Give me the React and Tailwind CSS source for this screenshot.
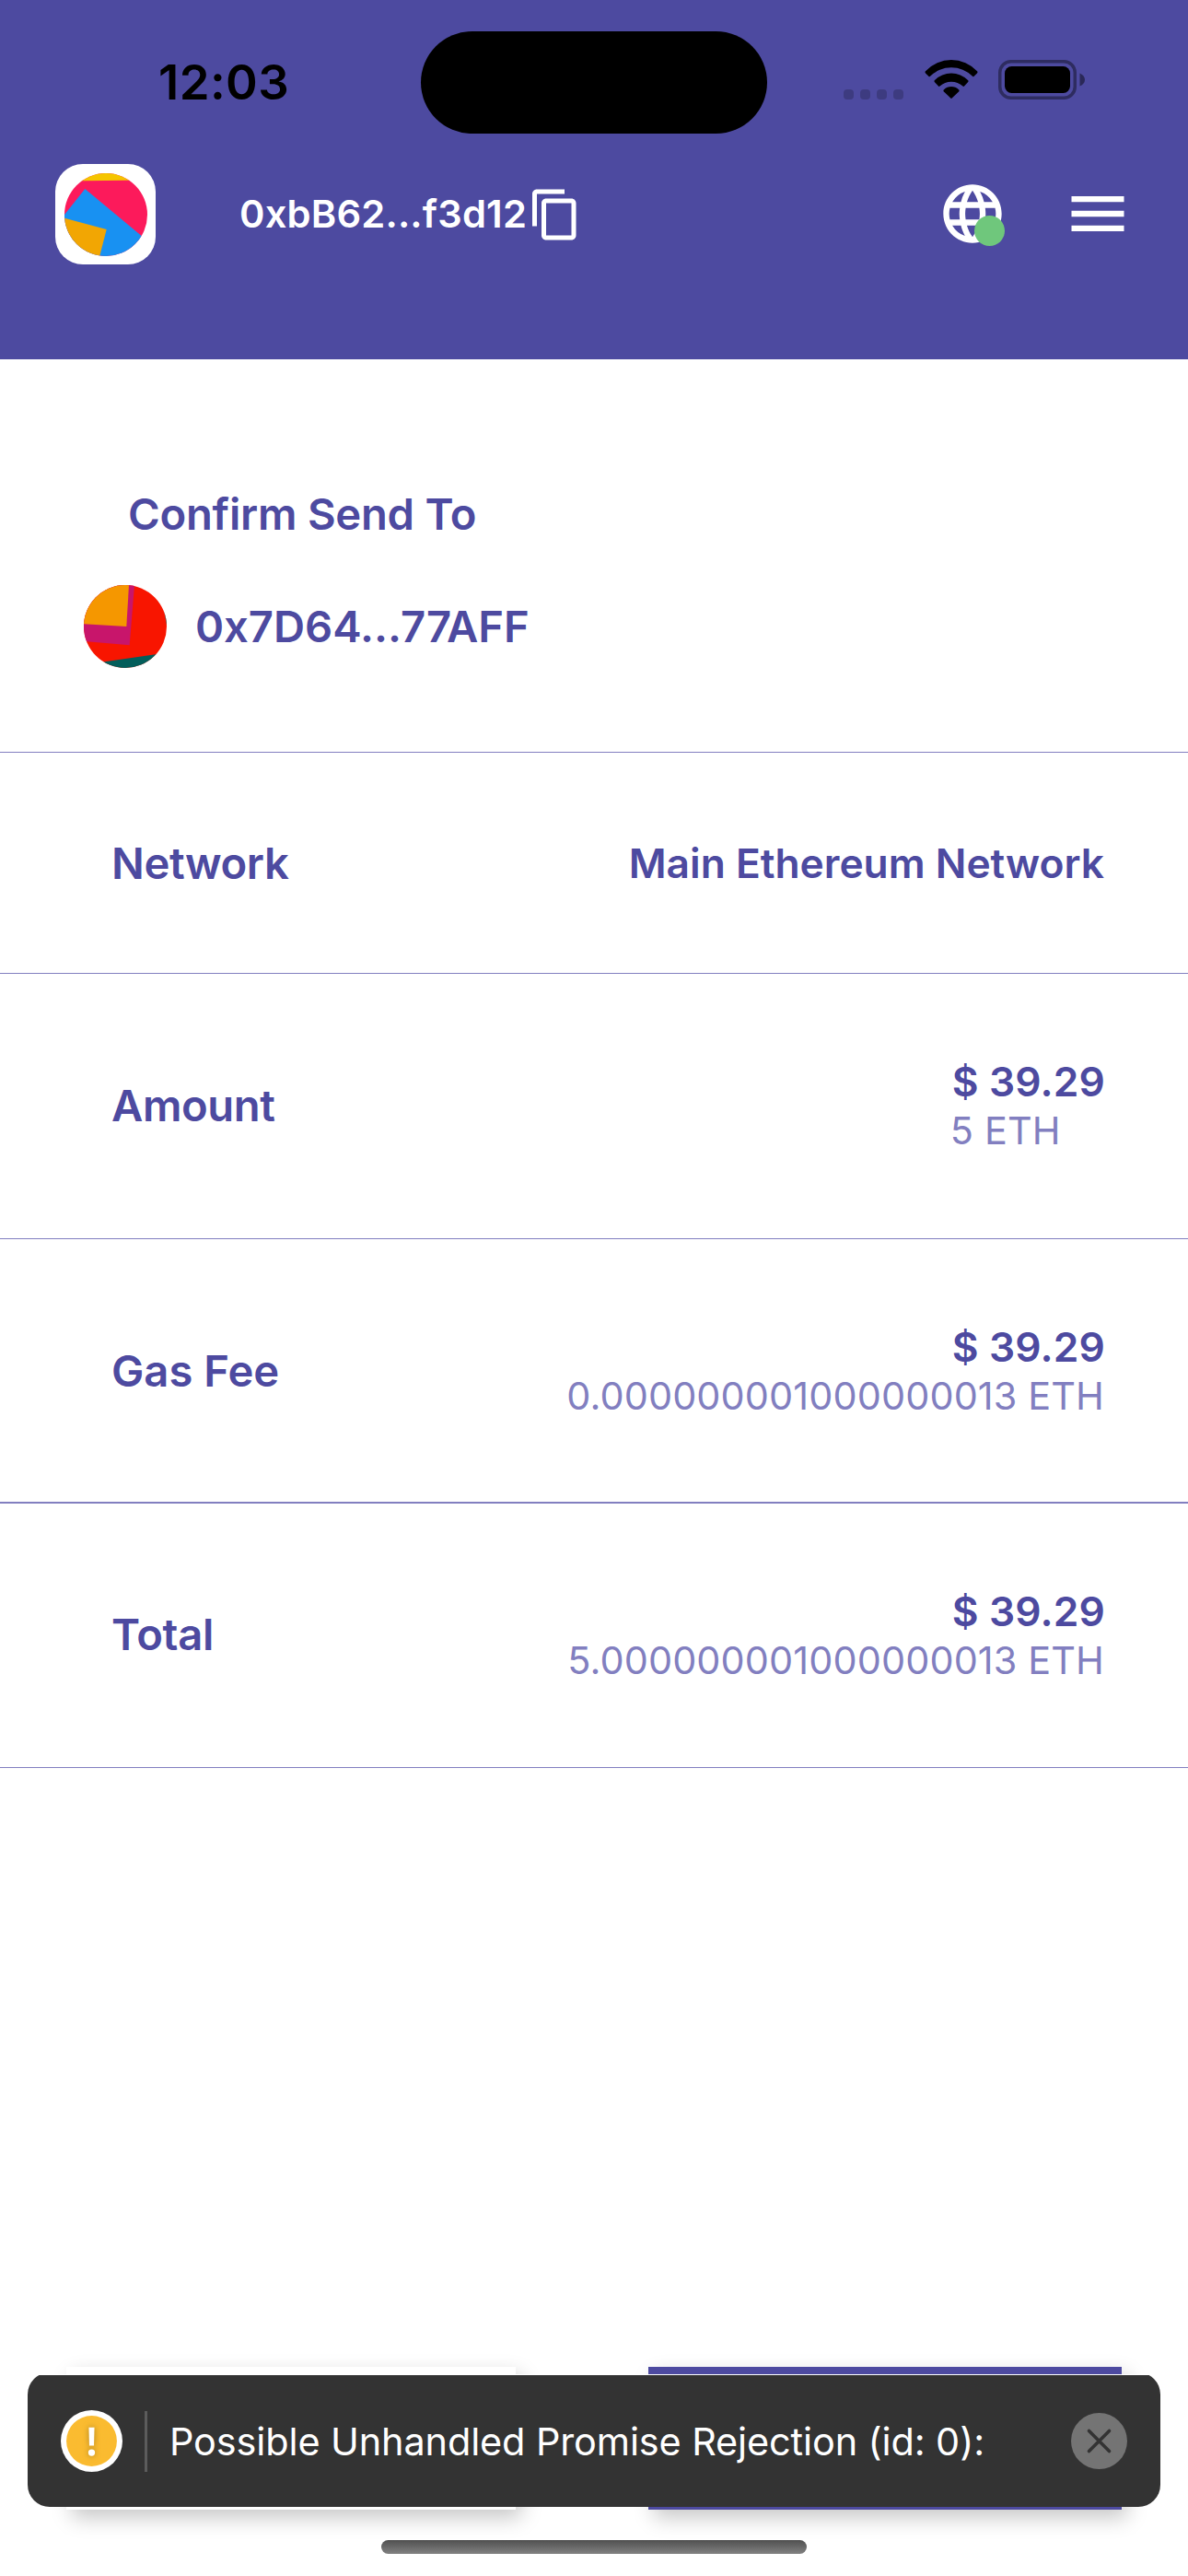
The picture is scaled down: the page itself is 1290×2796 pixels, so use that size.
import { MdContentCopy, MdLanguage, MdMenu } from "react-icons/md";

function WalletAvatar() {
  return (
    <svg className="size-[90px] rounded-full" viewBox="0 0 90 90">
      <rect width="90" height="90" fill="#fc1a5b" />
      <polygon points="0,0 90,0 90,7.6 0,8.4" fill="#f5c500" />
      <polygon points="22.3,17 100,81.6 100,110 -20,110 -20,70" fill="#1891f2" />
      <polygon points="45.7,61 -10,46 -10,110 33,110" fill="#f2a603" />
    </svg>
  );
}

function RecipientAvatar() {
  return (
    <svg className="size-[90px] rounded-full" viewBox="0 0 90 90">
      <rect width="90" height="90" fill="#f81500" />
      <polygon points="49.7,65.3 55,0 0,0 0,61" fill="#c8156b" />
      <polygon points="46.3,45 49,0 0,0 0,42.3" fill="#f59700" />
      <polygon points="0,86.4 90,73.5 90,90 0,90" fill="#035e5b" />
      <polygon points="87.2,28 90.8,48 92,28" fill="#035e5b" />
    </svg>
  );
}

function StatusBar() {
  return (
    <div className="flex h-[111px] items-center pl-[172px]">
      <span className="mt-[-1px] w-[285px] text-[52.7px] leading-none font-semibold tracking-[0.4px] text-black">12:03</span>
      <div className="h-[111px] w-[376px] rounded-full bg-black" />
      <div className="mt-[25px] ml-[83px] flex gap-[7px]">
        {[0, 1, 2, 3].map((i) => (
          <span key={i} className="size-[11px] rounded-[4px] bg-black/20" />
        ))}
      </div>
      <svg className="-mt-[7px] ml-[23px] h-[42px] w-[58px]" viewBox="0 0 58 42" fill="#000">
        <path d="M1 14.4Q0 13.3 1 12.2A38.3 38.3 0 0 1 57 12.2Q58 13.3 57 14.4L53.4 17.9Q52.7 18.5 52 17.8A32.5 32.5 0 0 0 6 17.8Q5.3 18.5 4.6 17.9Z" />
        <path d="M10.8 24Q10 23 11 22A25.2 25.2 0 0 1 47 22Q48 23 47.2 24L43 28.6Q42.3 29.2 41.5 28.5A18.6 18.6 0 0 0 16.5 28.5Q15.7 29.2 15 28.6Z" />
        <path d="M20.7 34.2Q20 33.3 21 32.3A11.4 11.4 0 0 1 37 32.3Q38 33.3 37.3 34.2L29.7 41.6Q29 42.2 28.3 41.6Z" />
      </svg>
      <svg className="-mt-[6px] ml-[22px] h-[43px] w-[95px]" viewBox="0 0 95 43">
        <rect x="1.75" y="1.75" width="81.5" height="39.5" rx="12" fill="none" stroke="#000" strokeOpacity=".4" strokeWidth="3.5" />
        <rect x="7" y="7" width="71" height="29" rx="7.5" fill="#000" />
        <path d="M88.5 14.5Q94 17 94 21.5T88.5 28.5Z" fill="#000" fillOpacity=".45" />
      </svg>
    </div>
  );
}

function Header() {
  return (
    <header className="h-[390px] shrink-0 bg-[#4d4aa0] pt-[34px]">
      <StatusBar />
      <div className="mt-[33px] flex h-[109px] items-center pl-[60px] text-white">
        <div className="flex size-[109px] items-center justify-center rounded-[30px] bg-white">
          <WalletAvatar />
        </div>
        <span className="ml-[91px] w-[313px] text-[41.7px] leading-none font-semibold tracking-[0.18px] whitespace-nowrap">
          0xbB62...f3d12
        </span>
        <MdContentCopy className="size-[60px] shrink-0" />
        <div className="relative -mt-[1px] ml-[385px] size-[76px] shrink-0">
          <MdLanguage className="size-[76px]" />
          <span className="absolute top-[39.5px] left-[39.5px] size-[33px] rounded-full bg-[#6fc77c]" />
        </div>
        <MdMenu className="-mt-[1px] ml-[60px] size-[76px] shrink-0" />
      </div>
    </header>
  );
}

function Amount({ usd, eth }) {
  return (
    <>
      <div className="text-[44.3px] leading-[53px] font-semibold tracking-[0.12px]">{usd}</div>
      <div className="text-[41.4px] leading-[52px] tracking-[0.12px] text-[#827fc0]">{eth}</div>
    </>
  );
}

function Row({ label, labelClass, className, children }) {
  return (
    <div className={`flex items-center justify-between border-[#827fc0] pr-[90px] pl-[121px] ${className}`}>
      <span className={`text-[47.2px] leading-none font-semibold ${labelClass}`}>{label}</span>
      {children}
    </div>
  );
}

function Toast() {
  return (
    <div className="absolute top-[2577px] left-[30px] h-[144px] w-[1230px] overflow-hidden border-t border-white">
      <div className="-mt-[3px] flex h-[146px] items-center rounded-[24px] bg-[#333] px-[36px]">
        <svg className="mt-[3px] size-[67px] shrink-0" viewBox="0 0 66 66">
          <circle cx="33" cy="33" r="33" fill="#fff" />
          <circle cx="33" cy="33" r="27" fill="#fabb30" />
          <g fill="#fff" className="drop-shadow-[0_0_3px_rgba(120,90,20,0.6)]">
            <path d="M30 18.5h6l-.5 19.5h-5z" />
            <circle cx="33" cy="45.4" r="3.6" />
          </g>
        </svg>
        <span className="mt-[3px] ml-[24px] h-[66px] w-[3px] bg-[#5c5c5c]" />
        <span className="mt-[3px] ml-[24px] text-[41.4px] leading-[60px] tracking-[-0.1px] whitespace-nowrap text-white">
          Possible Unhandled Promise Rejection (id: 0):
        </span>
        <svg className="mt-[3px] ml-auto size-[61px] shrink-0" viewBox="0 0 61 61">
          <circle cx="30.5" cy="30.5" r="30.5" fill="#747474" />
          <path d="M19.5 19.5L41.5 41.5M41.5 19.5L19.5 41.5" stroke="#333" strokeWidth="3.6" strokeLinecap="round" />
        </svg>
      </div>
    </div>
  );
}

export default function App() {
  return (
    <div className="relative flex h-[2796px] w-[1290px] flex-col overflow-hidden bg-white font-['Inter',sans-serif] text-[#4d4aa0]">
      <Header />
      <main className="flex flex-1 flex-col">
        <section className="h-[427px] shrink-0 border-b border-[#827fc0] pt-[138px]">
          <h1 className="ml-[139px] text-[47.2px] leading-[60px] font-semibold tracking-[-0.25px]">Confirm Send To</h1>
          <div className="mt-[47px] ml-[91px] flex items-center gap-[31px]">
            <RecipientAvatar />
            <span className="mb-[1px] text-[47.2px] leading-[60px] font-semibold tracking-[-0.05px]">0x7D64...77AFF</span>
          </div>
        </section>
        <Row label="Network" labelClass="tracking-[-0.4px]" className="h-[240px] border-b">
          <span className="mt-[1px] mr-[1px] text-[44.3px] leading-none font-semibold">Main Ethereum Network</span>
        </Row>
        <Row label="Amount" labelClass="mb-[2px] tracking-[-0.4px]" className="h-[288px] border-b">
          <div className="[&>*:last-child]:-ml-[2px]">
            <Amount usd="$ 39.29" eth="5 ETH" />
          </div>
        </Row>
        <Row label="Gas Fee" labelClass="tracking-[0px]" className="h-[287px] border-b-2">
          <div className="mt-[1px] text-right [&>*:last-child]:pr-[1px]">
            <Amount usd="$ 39.29" eth="0.000000001000000013 ETH" />
          </div>
        </Row>
        <Row label="Total" labelClass="mb-[2px] tracking-[-0.3px]" className="h-[287px] border-b">
          <div className="text-right [&>*:last-child]:pr-[1px]">
            <Amount usd="$ 39.29" eth="5.000000001000000013 ETH" />
          </div>
        </Row>
        <div className="mt-auto mb-[72px] flex h-[155px] gap-[144px] pl-[72px]">
          <div className="w-[488px] bg-white shadow-[6px_9px_21px_rgba(0,0,0,0.22)]" />
          <div className="w-[514px] bg-[#4d4aa0] shadow-[6px_9px_21px_rgba(0,0,0,0.22)]" />
        </div>
      </main>
      <Toast />
      <div className="absolute top-[2757px] left-[414px] h-[15px] w-[462px] rounded-full bg-linear-to-b from-[#505050] to-[#828282]" />
    </div>
  );
}
